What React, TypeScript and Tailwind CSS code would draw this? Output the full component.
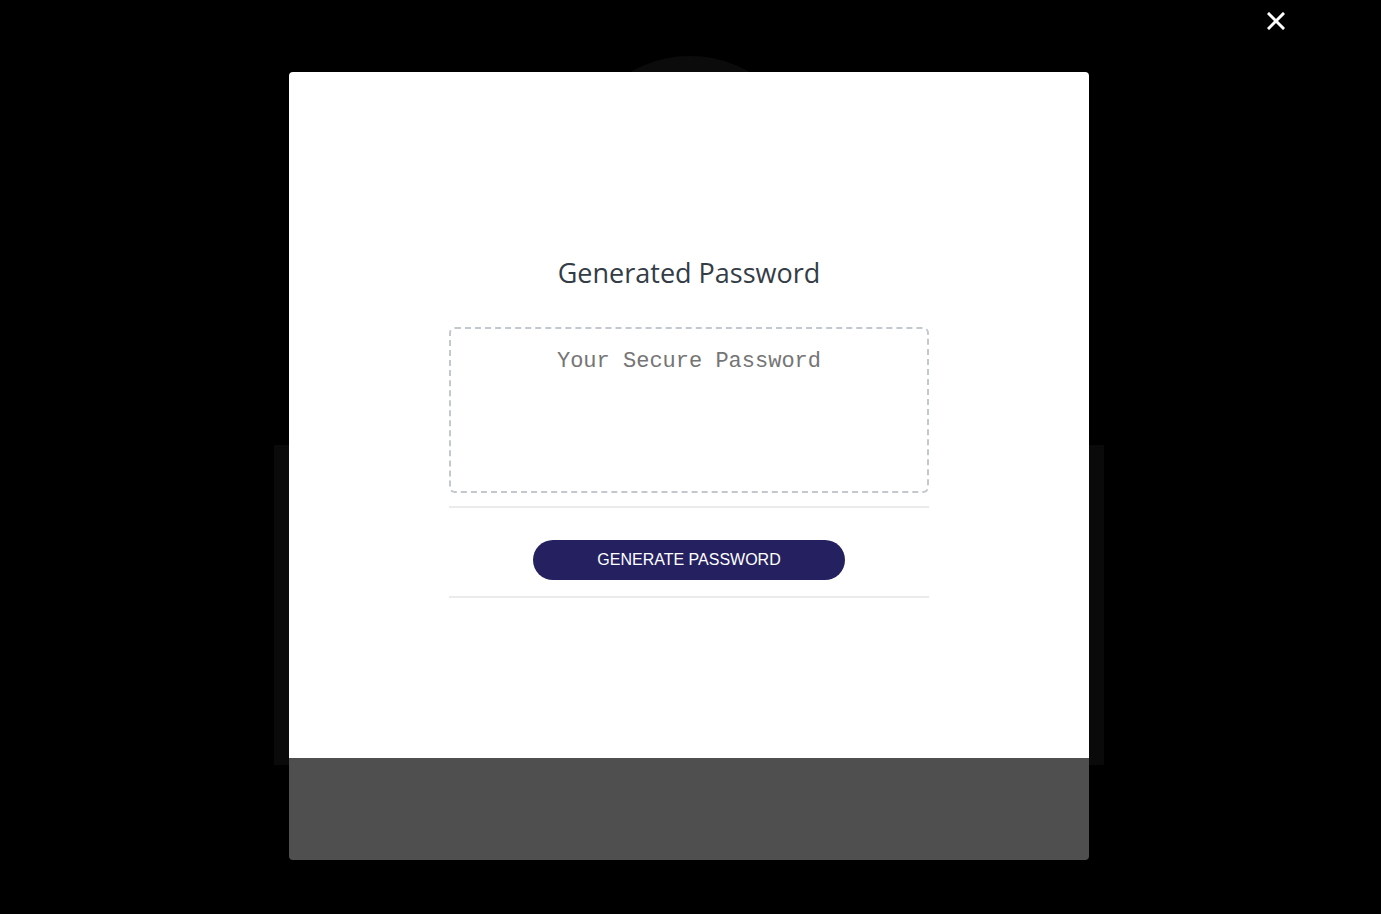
import React from "react";

export default function App() {
  return (
    <div className="relative h-[914px] w-full overflow-hidden bg-black" style={{ fontFamily: '"Open Sans", sans-serif' }}>
      {/* faint background shapes behind overlay */}
      <div className="absolute left-[570px] top-[56px] h-[240px] w-[240px] rounded-full bg-[#0b0b0b]" />
      <div className="absolute left-[274px] top-[445px] h-[320px] w-[830px] bg-[#0a0a0a]" />

      {/* close button */}
      <button className="absolute left-[1266px] top-[11px] flex h-[20px] w-[20px] items-center justify-center" aria-label="Close">
        <svg width="18" height="18" viewBox="0 0 18 18">
          <path d="M2 2 L16 16 M16 2 L2 16" stroke="#ffffff" strokeWidth="3" strokeLinecap="square" />
        </svg>
      </button>

      <div className="relative ml-[289px] mt-[72px] w-[800px] overflow-hidden rounded-[4px]">
        <div className="flex h-[686px] flex-col items-center bg-white pt-[181px]">
          <h2 className="text-[27px] font-[500] leading-[40px] text-[#343c46]">Generated Password</h2>
          <div
            className="mt-[34px] h-[166px] w-[480px] rounded-[6px] border-2 border-dashed border-[#c3c8cf] pt-[18px] text-center text-[22px] leading-[30px] text-[#757575]"
            style={{ fontFamily: '"Liberation Mono", monospace' }}
          >
            Your Secure Password
          </div>
          <div className="mt-[13px] h-[2px] w-[480px] bg-[#ebebeb]" />
          <button
            className="mt-[32px] h-[40px] w-[312px] rounded-full bg-[#252161] text-[16px] text-white"
            style={{ fontFamily: '"Liberation Sans", Arial, sans-serif' }}
          >
            GENERATE PASSWORD
          </button>
          <div className="mt-[16px] h-[2px] w-[480px] bg-[#ebebeb]" />
        </div>
        <div className="h-[102px] bg-[#4f4f4f]" />
      </div>
    </div>
  );
}
